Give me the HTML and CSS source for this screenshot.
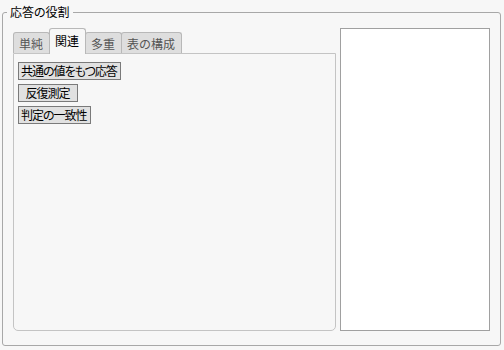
FILE: index.html
```html
<!DOCTYPE html>
<html>
<head>
  <meta charset="utf-8">
  <link rel="stylesheet" href="styles.css">
</head>
<body>
  <fieldset class="role-box">
    <legend>応答の役割</legend>
    <div class="role-body">
      <div class="tab-column">
        <div class="tabs">
          <div class="tab">単純</div>
          <div class="tab active">関連</div>
          <div class="tab">多重</div>
          <div class="tab">表の構成</div>
        </div>
        <div class="tab-panel">
          <button class="role-btn">共通の値をもつ応答</button>
          <button class="role-btn">反復測定</button>
          <button class="role-btn">判定の一致性</button>
        </div>
      </div>
      <div class="role-list"></div>
    </div>
  </fieldset>
</body>
</html>
```

FILE: styles.css
```css
body {
  margin: 0;
  padding: 0;
  background: #f7f7f7;
  font-family: "Noto Sans CJK JP", "Noto Sans", sans-serif;
  font-size: 12px;
  color: #000;
}

.role-box {
  margin: 4px 3px 0 2px;
  padding: 8px 10px 14px 10px;
  border: 1px solid #a8a8a8;
  border-radius: 3px;
}

.role-box legend {
  padding: 0 3px;
  margin-left: -6px;
  line-height: 16px;
  color: #000;
  font-feature-settings: "palt";
}

.role-body {
  display: flex;
  gap: 4px;
}

.tab-column {
  width: 323px;
  display: flex;
  flex-direction: column;
}

.tabs {
  display: flex;
  align-items: flex-end;
  height: 25px;
}

.tab {
  height: 20px;
  line-height: 21px;
  padding: 0 6px 0 5px;
  background: #dedede;
  color: #555;
  border: 1px solid #b8b8b8;
  border-bottom: none;
  border-radius: 3px 3px 0 0;
  margin-right: -1px;
}

.tab.active {
  height: 25px;
  line-height: 24px;
  background: #f7f7f7;
  color: #000;
  position: relative;
  z-index: 1;
  margin-bottom: -1px;
}

.tab-panel {
  flex: 1;
  border: 1px solid #c4c4c4;
  border-radius: 0 0 5px 5px;
  padding: 8px 4px;
  display: flex;
  flex-direction: column;
  align-items: flex-start;
  gap: 4px;
}

.role-btn {
  font: inherit;
  font-feature-settings: "palt";
  letter-spacing: -1px;
  height: 18px;
  line-height: 16px;
  min-width: 60px;
  padding: 0 3px 0 2px;
  margin: 0;
  background: #e1e1e1;
  color: #000;
  border: 1px solid #7a7a7a;
  border-radius: 0;
}

.role-list {
  width: 148px;
  height: 301px;
  background: #fff;
  border: 1px solid #a0a0a0;
}
```
